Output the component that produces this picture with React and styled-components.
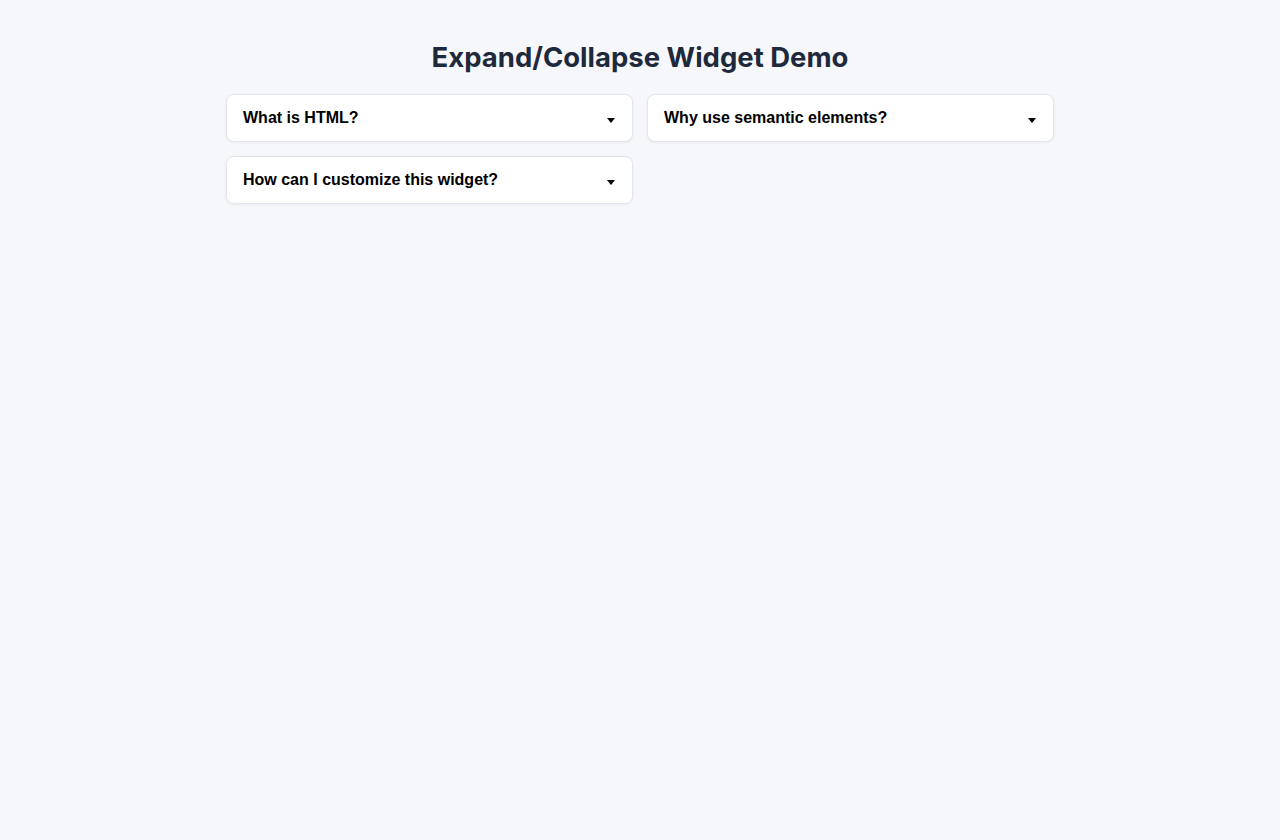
import React from 'react';
import styled, { createGlobalStyle } from 'styled-components';

const GlobalStyle = createGlobalStyle`
  * {
    box-sizing: border-box;
  }

  body {
    margin: 0;
    background-color: #f5f7fb;
    font-family: "Liberation Sans", Arial, sans-serif;
  }
`;

const Page = styled.main`
  min-height: 100vh;
  padding: 40px 0;
  display: flex;
  flex-direction: column;
  align-items: center;
`;

const Title = styled.h1`
  margin: 0 0 20px;
  font-family: Inter, "Noto Sans", sans-serif;
  font-size: 27.5px;
  line-height: 34px;
  font-weight: 700;
  color: #1e293b;
`;

const Grid = styled.div`
  width: 828px;
  display: grid;
  grid-template-columns: 1fr 1fr;
  gap: 14px;
  align-items: start;
`;

const Item = styled.details`
  background-color: #fff;
  border: 1px solid #e2e6ec;
  border-radius: 8px;
  box-shadow: 0 1px 3px rgba(15, 23, 42, 0.06);
`;

const Summary = styled.summary`
  display: flex;
  align-items: center;
  justify-content: space-between;
  padding: 14px 16px;
  font-size: 16px;
  line-height: 18px;
  font-weight: 700;
  color: #000;
  cursor: pointer;
  list-style: none;

  &::-webkit-details-marker {
    display: none;
  }

  &::after {
    content: '';
    margin-top: 4px;
    margin-right: 1px;
    border-left: 4px solid transparent;
    border-right: 4px solid transparent;
    border-top: 5px solid #000;
  }
`;

const questions = [
  'What is HTML?',
  'Why use semantic elements?',
  'How can I customize this widget?',
];

export default function App() {
  return (
    <>
      <GlobalStyle />
      <Page>
        <Title>Expand/Collapse Widget Demo</Title>
        <Grid>
          {questions.map((q) => (
            <Item key={q}>
              <Summary>{q}</Summary>
            </Item>
          ))}
        </Grid>
      </Page>
    </>
  );
}
